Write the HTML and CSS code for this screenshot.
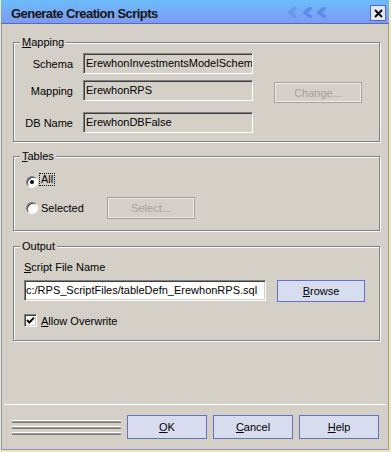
FILE: index.html
```html
<!DOCTYPE html>
<html>
<head>
<meta charset="utf-8">
<title>Generate Creation Scripts</title>
<link rel="stylesheet" href="styles.css">
</head>
<body>
<div class="window">
  <div class="titlebar">
    <span class="title">Generate Creation Scripts</span>
    <svg class="chevrons" width="42" height="11" viewBox="0 0 42 11">
      <path d="M9 1.5 L4 5.5 L9 9.5" fill="none" stroke="#6a97ec" stroke-width="3.6" stroke-linecap="round" stroke-linejoin="round"/>
      <path d="M24 1.5 L19 5.5 L24 9.5" fill="none" stroke="#5d8be8" stroke-width="3.6" stroke-linecap="round" stroke-linejoin="round"/>
      <path d="M38 1.5 L33 5.5 L38 9.5" fill="none" stroke="#5d8be8" stroke-width="3.6" stroke-linecap="round" stroke-linejoin="round"/>
    </svg>
    <div class="close">
      <svg width="9" height="9" viewBox="0 0 9 9"><path d="M1 1 L8 8 M8 1 L1 8" stroke="#000" stroke-width="1.8" fill="none"/></svg>
    </div>
  </div>

  <div class="content">
    <fieldset class="group group-mapping">
      <legend><u>M</u>apping</legend>
      <div class="row">
        <span class="label">Schema</span>
        <div class="field readonly">ErewhonInvestmentsModelSchema</div>
      </div>
      <div class="row row-mapping">
        <span class="label">Mapping</span>
        <div class="field readonly">ErewhonRPS</div>
        <button class="btn-disabled btn-change" type="button">Change...</button>
      </div>
      <div class="row row-db">
        <span class="label">DB Name</span>
        <div class="field readonly">ErewhonDBFalse</div>
      </div>
    </fieldset>

    <fieldset class="group group-tables">
      <legend><u>T</u>ables</legend>
      <div class="radio-row radio-row-all">
        <span class="radio checked"></span>
        <span class="focus-text">All</span>
      </div>
      <div class="radio-row radio-row-selected">
        <span class="radio"></span>
        <span class="radio-label">Selected</span>
        <button class="btn-disabled btn-select" type="button">Select...</button>
      </div>
    </fieldset>

    <fieldset class="group group-output">
      <legend>Output</legend>
      <div class="out-label"><u>S</u>cript File Name</div>
      <div class="out-row">
        <div class="field editable">c:/RPS_ScriptFiles/tableDefn_ErewhonRPS.sql</div>
        <button class="btn btn-browse" type="button"><u>B</u>rowse</button>
      </div>
      <div class="check-row">
        <span class="checkbox">
          <svg width="9" height="9" viewBox="0 0 9 9"><path d="M1 4 L3.3 6.5 L8 1.6" fill="none" stroke="#000" stroke-width="1.9"/></svg>
        </span>
        <span><u>A</u>llow Overwrite</span>
      </div>
    </fieldset>
  </div>

  <div class="separator"></div>

  <div class="footer">
    <div class="grip"><span></span><span></span><span></span></div>
    <div class="buttons">
      <button class="btn" type="button"><u>O</u>K</button>
      <button class="btn" type="button"><u>C</u>ancel</button>
      <button class="btn" type="button"><u>H</u>elp</button>
    </div>
  </div>
</div>
</body>
</html>
```

FILE: styles.css
```css
html, body {
  margin: 0;
  padding: 0;
  background: #ffffff;
}

body {
  font-family: "Liberation Sans", Arial, sans-serif;
  font-size: 11px;
  color: #000;
}

.window {
  width: 391px;
  height: 452px;
  box-sizing: border-box;
  background: #d4d0c8;
  border-left: 1px solid #efeba6;
  border-right: 2px solid #efeba6;
  border-bottom: 2px solid #efeba6;
  box-shadow: inset 1px 0 #8b95cf, inset -1px 0 #9c9cab, inset 0 -1px #8b95cf;
  display: flex;
  flex-direction: column;
}

/* ---------- title bar ---------- */
.titlebar {
  height: 24px;
  flex: none;
  box-sizing: border-box;
  border-bottom: 1px solid #5a66c6;
  background: linear-gradient(#6bbcfb, #7e9af1);
  display: flex;
  align-items: flex-start;
  padding: 0 3px 0 10px;
}

.title {
  margin-top: 7px;
  font-weight: bold;
  font-size: 13px;
  line-height: 13px;
  letter-spacing: -0.55px;
  color: #141414;
}

.chevrons {
  margin-left: auto;
  margin-right: 42px;
  margin-top: 7px;
}

.close {
  margin-top: 5px;
  width: 16px;
  height: 16px;
  box-sizing: border-box;
  border: 1px solid #5b66c2;
  background: #e2e6f5;
  display: flex;
  align-items: center;
  justify-content: center;
}

/* ---------- content ---------- */
.content {
  flex: 1;
  padding: 12px 9px 0 12px;
}

.group {
  margin: 0;
  padding: 4px 8px 8px 6px;
  border: 1px solid #808080;
  box-shadow: inset 1px 1px #fff, 1px 1px #fff;
  min-width: 0;
}

.group legend {
  padding: 0 2px;
  margin: 0;
  line-height: 13px;
  font-size: 11px;
  background: #d4d0c8;
}

.group-tables {
  margin-top: 8px;
  padding: 10px 8px 11px 6px;
}

.group-output {
  margin-top: 9px;
  padding: 8px 8px 13px 6px;
}

/* mapping rows */
.row {
  display: flex;
  align-items: center;
  height: 21px;
}

.row-mapping { margin-top: 6px; }
.row-db { margin-top: 11px; }

.label {
  width: 53px;
  margin-right: 10px;
  text-align: right;
  white-space: nowrap;
}

.field {
  box-sizing: border-box;
  height: 21px;
  line-height: 19px;
  border: 1px solid;
  border-color: #808080 #ffffff #ffffff #808080;
  box-shadow: inset 1px 1px #404040, inset -1px -1px #d4d0c8;
  white-space: nowrap;
  overflow: hidden;
}

.readonly {
  width: 170px;
  padding-left: 2px;
  background: #d4d0c8;
}

.editable {
  width: 242px;
  padding-left: 1px;
  background: #ffffff;
}

.btn-disabled {
  box-sizing: border-box;
  width: 88px;
  height: 21px;
  padding: 0;
  margin: 0;
  font-family: inherit;
  font-size: 11px;
  color: #a4a2a0;
  background: #d4d0c8;
  border: 1px solid #a3a19e;
  box-shadow: inset 0 0 0 1px #ecebe7;
}

.btn-change {
  margin-left: 21px;
  align-self: flex-start;
  margin-top: 2px;
}

.btn-select {
  height: 22px;
  margin-left: 0;
}

/* radios */
.radio-row {
  display: flex;
  align-items: center;
}

.radio-row-all {
  align-items: flex-start;
}

.radio-row-selected {
  margin-top: 9px;
  height: 22px;
}

.radio {
  position: relative;
  width: 12px;
  height: 12px;
  box-sizing: border-box;
  border-radius: 50%;
  border: 1px solid;
  border-color: #808080 #ffffff #ffffff #808080;
  background: #fff;
  box-shadow: inset 1px 1px #404040;
  margin-left: 6px;
  flex: none;
}

.radio-row-all .radio {
  margin-top: 3px;
  margin-right: 1px;
}

.radio-row-selected .radio {
  margin-right: 3px;
}

.radio.checked::after {
  content: "";
  position: absolute;
  left: 3px;
  top: 3px;
  width: 4px;
  height: 4px;
  border-radius: 50%;
  background: #000;
}

.focus-text {
  border: 1px dotted #000;
  padding: 0 1px;
  line-height: 11px;
}

.radio-label {
  width: 66px;
}

/* output */
.out-label {
  margin-left: 4px;
  line-height: 13px;
}

.out-row {
  display: flex;
  align-items: flex-start;
  margin-top: 6px;
  margin-left: 4px;
}

.btn {
  box-sizing: border-box;
  width: 80px;
  height: 24px;
  padding: 0;
  margin: 0;
  font-family: inherit;
  font-size: 11px;
  color: #000;
  background: #d8dcef;
  border: 1px solid #6171c6;
}

.btn-browse {
  width: 88px;
  height: 22px;
  margin-left: 11px;
}

.check-row {
  display: flex;
  align-items: center;
  margin-top: 12px;
  margin-left: 4px;
  height: 13px;
}

.checkbox {
  box-sizing: border-box;
  width: 13px;
  height: 13px;
  border: 1px solid;
  border-color: #808080 #ffffff #ffffff #808080;
  box-shadow: inset 1px 1px #404040, inset -1px -1px #d4d0c8;
  background: #fff;
  margin-right: 4px;
  display: flex;
  align-items: center;
  justify-content: center;
  flex: none;
}

/* ---------- footer ---------- */
.separator {
  flex: none;
  height: 1px;
  background: #ffffff;
  margin: 0 3px;
}

.footer {
  flex: none;
  height: 45px;
  box-sizing: border-box;
  padding: 10px 0 0 11px;
  display: flex;
  align-items: flex-start;
}

.grip {
  width: 109px;
  margin-top: 5px;
  margin-right: 6px;
  display: flex;
  flex-direction: column;
  gap: 3px;
}

.grip span {
  display: block;
  height: 3px;
  background: linear-gradient(#ffffff 0 1px, #9a9a9a 1px 2px, #7c7c7c 2px 3px);
}

.buttons {
  display: flex;
  gap: 6px;
}
```
